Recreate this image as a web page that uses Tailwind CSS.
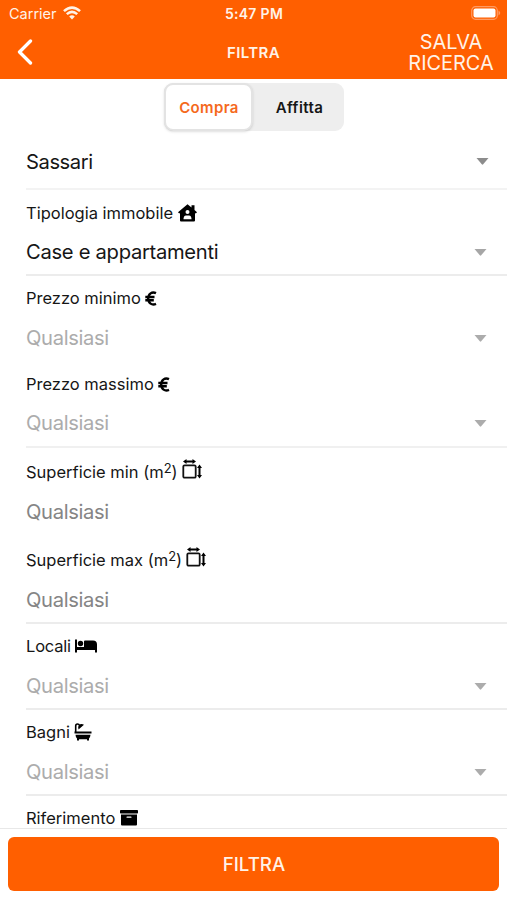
<!DOCTYPE html>
<html lang="it">
<head>
<meta charset="utf-8">
<title>Filtra</title>
<script src="https://cdn.jsdelivr.net/npm/@tailwindcss/browser@4"></script>
</head>
<body class="w-[507px] h-[900px] overflow-hidden bg-white font-['Inter','Liberation_Sans',sans-serif] text-[#161616]">
<svg class="hidden">
  <symbol id="caret" viewBox="0 0 12 7"><path d="M0 0H12L6.700 6.300Q6 7 5.300 6.300Z" fill="currentColor"/></symbol>
  <symbol id="euro" viewBox="0 0 12 15"><path d="M11 2.200C7 0.300 3.200 2.800 3.200 7.500S7 14.700 11 12.800M0.300 6H9.500M0.300 9.200H8.800" fill="none" stroke="#000" stroke-width="2.400"/></symbol>
  <symbol id="area" viewBox="0 0 21 20"><rect x="1.300" y="6.300" width="12.400" height="12.400" rx="1.300" fill="none" stroke="#111" stroke-width="1.800"/><path d="M3 2.500H12M17.500 8V17" stroke="#000" stroke-width="2"/><path d="M1 2.500L4.500 0V5ZM14 2.500L10.500 0V5ZM17.500 5.500L15 9H20ZM17.500 19.500L15 16H20Z"/></symbol>
</svg>
<div class="flex h-full flex-col">
  <header class="h-[79px] shrink-0 bg-[#ff5f00] text-[#fff3e8]">
    <div class="grid h-[27px] grid-cols-3 items-center pl-[9px] pr-[8px]">
      <div class="flex items-center gap-[6px]">
        <span class="text-[14.500px] leading-[27px]">Carrier</span>
        <svg class="mb-px h-[14px] w-[18px]" viewBox="0 0 19 14" fill="none" stroke="currentColor" stroke-width="2.700"><path d="M1 5Q9.500 -2.400 18 5M4 8.200Q9.500 3.400 15 8.200"/><path d="M6.500 10.700Q9.500 8.200 12.500 10.700L9.500 13.800Z" fill="currentColor" stroke="none"/></svg>
      </div>
      <div class="text-center text-[14px] font-semibold leading-[27px] tracking-[0.300px]">5:47 PM</div>
      <svg class="mr-[-2px] mb-px h-[14px] w-[30px] justify-self-end" viewBox="0 0 30 14"><rect x=".700" y=".700" width="25.600" height="12.600" rx="3.800" fill="none" stroke="#ff9a62" stroke-width="1.200"/><rect x="2.500" y="2.500" width="22" height="9" rx="2" fill="#fff"/><path d="M27.500 4.500Q31 7 27.500 9.500Z" fill="#ff9a62"/></svg>
    </div>
    <div class="grid h-[52px] grid-cols-3 items-center pl-[17px] pr-[14px]">
      <svg class="mb-[2px] h-[26px] w-[16px]" viewBox="0 0 16 26" fill="none" stroke="#fff" stroke-width="3.300" stroke-linecap="round" stroke-linejoin="round"><path d="M13.500 2L2.500 13L13.500 24"/></svg>
      <h1 class="mr-[3px] text-center text-[15px] font-semibold leading-[50px] tracking-[0.400px]">FILTRA</h1>
      <div class="mr-[-2px] w-[88px] justify-self-end pb-px text-center text-[19.900px] leading-[20.500px]">SALVA RICERCA</div>
    </div>
  </header>
  <main class="min-h-0 flex-1 overflow-hidden">
    <div class="flex h-[57px] justify-center pt-[4px]">
      <div class="flex h-[48px] w-[180px] rounded-[9px] bg-[#eeeeee] text-[15px] font-semibold">
        <div class="flex w-[89px] items-center justify-center rounded-[9px] border-2 border-[#e3e3e3] bg-white pt-[2px] pl-[2px] tracking-[0.350px] text-[#f5691c] shadow-sm">Compra</div>
        <div class="flex flex-1 items-center justify-center pt-[2px] pl-[3px] tracking-[0.400px] text-[#161616]">Affitta</div>
      </div>
    </div>
    <div class="ml-[26px] flex h-[54px] items-center justify-between border-b-2 border-[#f3f3f3] pr-[18px]">
      <span class="pt-px text-[20.200px] tracking-[-0.450px]">Sassari</span><svg class="mb-px h-[7px] w-[13px] text-[#8c8c8c]"><use href="#caret"/></svg>
    </div>
    <section class="ml-[26px] h-[86px] border-b-2 border-[#ececec] pt-[11px]">
      <div class="flex h-[24px] items-center gap-[5px] text-[16.500px]"><span>Tipologia immobile</span>
        <svg class="mb-px h-[18px] w-[19px]" viewBox="0 0 19 18"><path d="M9.500 .300L13.500 3.500V1.300H16.500V6L19 8.200L17.800 9.500L17 9V16.500Q17 17.500 16 17.500H3Q2 17.500 2 16.500V9L1.200 9.500L0 8.200Z"/><circle cx="9.500" cy="8" r="2" fill="#fff"/><path d="M5.500 15.300Q5.500 11.500 8 11.500H11Q13.500 11.500 13.500 15.300Z" fill="#fff"/></svg></div>
      <div class="mt-[12px] flex h-[30px] items-center justify-between pr-[20px]"><span class="text-[20.200px] tracking-[-0.300px]">Case e appartamenti</span><svg class="h-[7px] w-[13px] text-[#a6a6a6]"><use href="#caret"/></svg></div>
    </section>
    <section class="ml-[26px] h-[86px] pt-[10px]">
      <div class="flex h-[24px] items-center gap-[4px] text-[16.500px]"><span>Prezzo minimo</span><svg class="h-[15px] w-[12px]"><use href="#euro"/></svg></div>
      <div class="mt-[13px] flex h-[30px] items-center justify-between pr-[20px] text-[#acacac]"><span class="text-[20.200px] tracking-[-0.350px]">Qualsiasi</span><svg class="h-[7px] w-[13px]"><use href="#caret"/></svg></div>
    </section>
    <section class="ml-[26px] h-[86px] border-b-2 border-[#f0f0f0] pt-[10px]">
      <div class="flex h-[24px] items-center gap-[4px] text-[16.500px]"><span>Prezzo massimo</span><svg class="h-[15px] w-[12px]"><use href="#euro"/></svg></div>
      <div class="mt-[12px] flex h-[30px] items-center justify-between pr-[20px] text-[#acacac]"><span class="text-[20.200px] tracking-[-0.350px]">Qualsiasi</span><svg class="h-[7px] w-[13px]"><use href="#caret"/></svg></div>
    </section>
    <section class="ml-[26px] h-[88px] pt-[12px]">
      <div class="flex h-[24px] items-center gap-[4px] text-[16.500px]"><span>Superficie min (m<sup class="top-[-5px] text-[13px]">2</sup>)</span><svg class="mb-[6px] h-[20px] w-[21px]"><use href="#area"/></svg></div>
      <div class="mt-[13px] flex h-[30px] items-center text-[20.200px] tracking-[-0.350px] text-[#858585]"><span>Qualsiasi</span></div>
    </section>
    <section class="ml-[26px] h-[88px] border-b-2 border-[#ececec] pt-[12px]">
      <div class="flex h-[24px] items-center gap-[4px] text-[16.500px]"><span>Superficie max (m<sup class="top-[-5px] text-[13px]">2</sup>)</span><svg class="mb-[6px] h-[20px] w-[21px]"><use href="#area"/></svg></div>
      <div class="mt-[13px] flex h-[30px] items-center text-[20.200px] tracking-[-0.350px] text-[#858585]"><span>Qualsiasi</span></div>
    </section>
    <section class="ml-[26px] h-[86px] border-b-2 border-[#ececec] pt-[10px]">
      <div class="flex h-[24px] items-center gap-[4px] text-[16.500px]"><span class="tracking-[-0.200px]">Locali</span>
        <svg class="h-[14px] w-[22px]" viewBox="0 0 22 14"><path d="M0 .500H2V8H9V2.500Q9 1.500 10 1.500H18Q22 1.500 22 5.500V13.500H20V11H2V13.500H0Z"/><circle cx="5.500" cy="4.500" r="2.700"/></svg></div>
      <div class="mt-[13px] flex h-[30px] items-center justify-between pr-[20px] text-[#acacac]"><span class="text-[20.200px] tracking-[-0.350px]">Qualsiasi</span><svg class="h-[7px] w-[13px]"><use href="#caret"/></svg></div>
    </section>
    <section class="ml-[26px] h-[86px] border-b-2 border-[#ececec] pt-[10px]">
      <div class="flex h-[24px] items-center gap-[4px] text-[16.500px]"><span>Bagni</span>
        <svg class="h-[18px] w-[18px]" viewBox="0 0 18 18"><path d="M1.700 9V3Q1.700 1 3.500 1Q5 1 5.600 2.500" fill="none" stroke="#000" stroke-width="1.600"/><path d="M4.500 6.500L10 1.700Q7 .300 5 2Q3.500 3.500 4.500 6.500ZM.500 8.600H17.500V10.600H.500ZM1.500 11.700H16.500Q16.300 14.500 15 15.500V17.500H13V16.200H5V17.500H3V15.500Q1.700 14.500 1.500 11.700Z"/></svg></div>
      <div class="mt-[13px] flex h-[30px] items-center justify-between pr-[20px] text-[#acacac]"><span class="text-[20.200px] tracking-[-0.350px]">Qualsiasi</span><svg class="h-[7px] w-[13px]"><use href="#caret"/></svg></div>
    </section>
    <section class="ml-[26px] pt-[10px]">
      <div class="flex h-[24px] items-center gap-[5px] text-[16.500px]"><span>Riferimento</span>
        <svg class="h-[16px] w-[18px]" viewBox="0 0 18 16"><rect width="18" height="3.600" rx=".800"/><path d="M1 4.600H17V14.500Q17 15.500 16 15.500H2Q1 15.500 1 14.500Z"/><rect x="6.500" y="6.500" width="5" height="1.300" rx=".600" fill="#fff"/></svg></div>
    </section>
  </main>
  <footer class="h-[72px] shrink-0 border-t border-[#e8e8e8] bg-white px-[8px] pt-[8px]">
    <button class="flex h-[54px] w-full items-center justify-center rounded-[6px] bg-[#ff5f00] pt-[2px] pl-px text-[18.700px] font-medium text-[#fff3e8]">FILTRA</button>
  </footer>
</div>
</body>
</html>
